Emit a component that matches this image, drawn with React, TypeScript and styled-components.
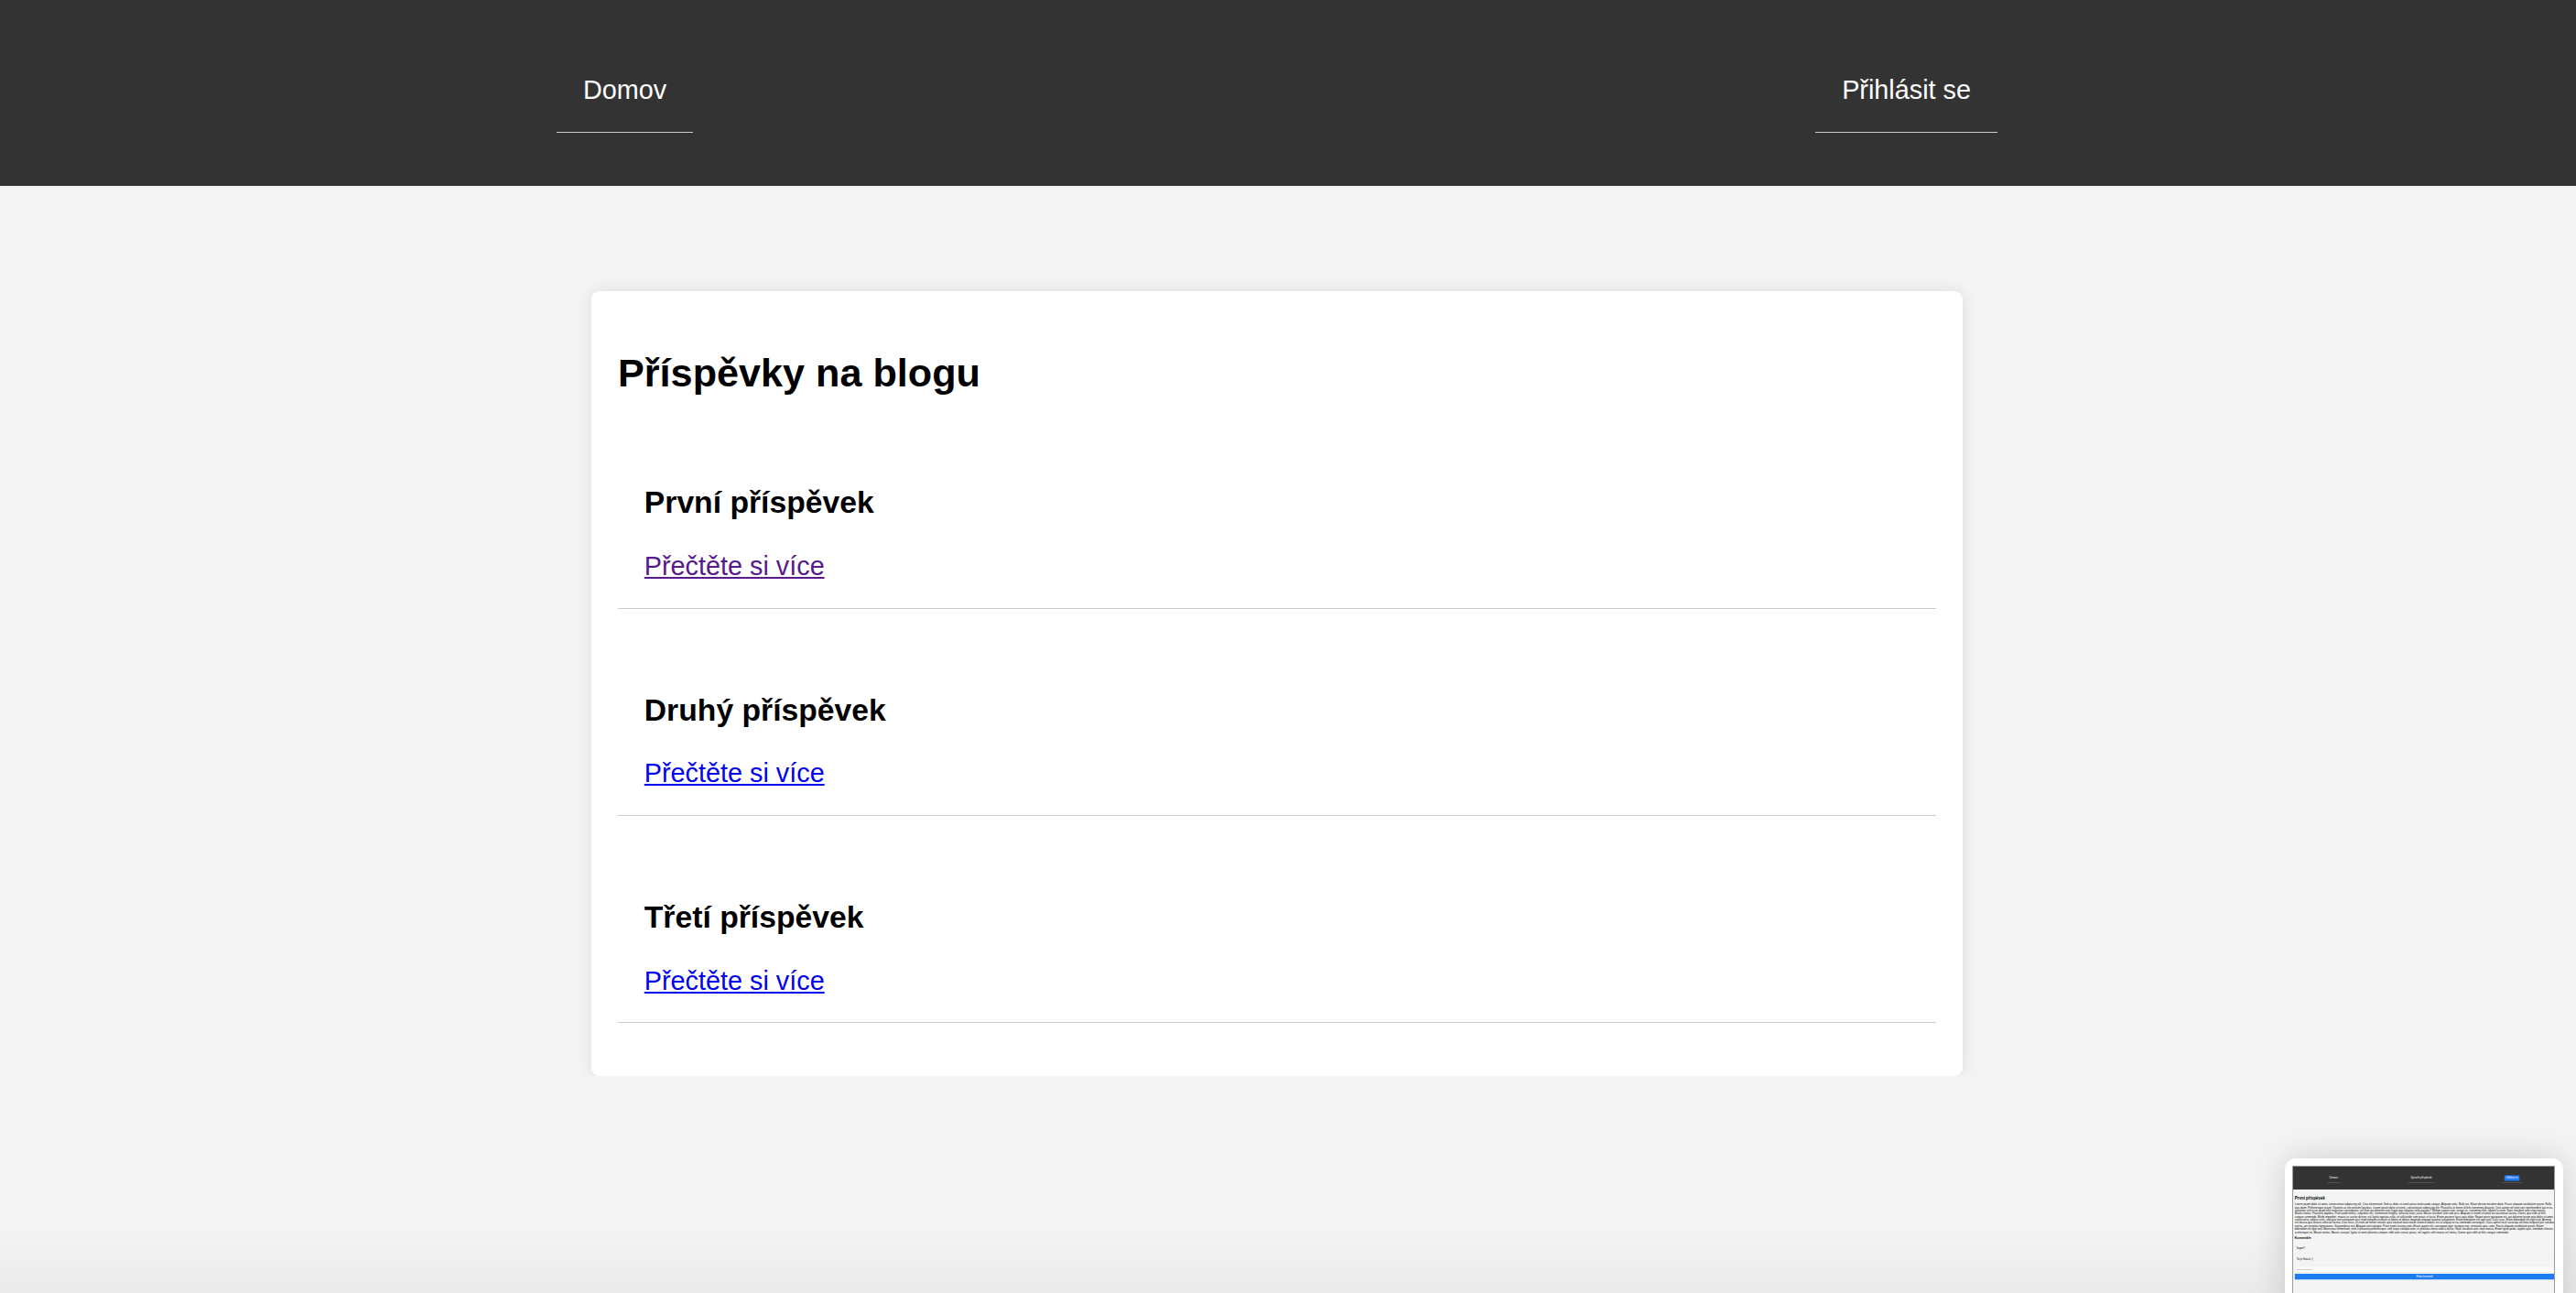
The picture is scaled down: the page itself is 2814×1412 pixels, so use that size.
import React from "react";
import styled, { createGlobalStyle } from "styled-components";

const GlobalStyle = createGlobalStyle`
  html, body {
    margin: 0;
    padding: 0;
    background: #f4f4f4;
    font-family: "Liberation Sans", Arial, Helvetica, sans-serif;
    overflow: hidden;
  }
`;

const Header = styled.header`
  background: #333;
  height: 203px;
  box-sizing: border-box;
  padding: 53px 632px 0 608px;
`;

const Nav = styled.nav`
  display: flex;
  justify-content: space-between;
  align-items: flex-start;
`;

const NavLink = styled.a`
  display: block;
  color: #fff;
  text-decoration: none;
  font-size: 28.8px;
  line-height: normal;
  padding: 29px;
  border-bottom: 1px solid #ccc;
`;

const Main = styled.main`
  padding: 115px 24px 0 0;
`;

const Card = styled.section`
  box-sizing: border-box;
  width: 1497.6px;
  margin: 0 auto;
  background: #fff;
  padding: 28.8px;
  border-radius: 9px;
  box-shadow: 0 0 18px rgba(0, 0, 0, 0.1);
`;

const Title = styled.h2`
  font-size: 43.2px;
  font-weight: bold;
  line-height: normal;
  margin: 35.9px 0 35.4px;
  color: #000;
`;

const Post = styled.article`
  font-size: 28.8px;
  line-height: normal;
  padding: 28.8px;
  margin-bottom: 28.8px;
  border-bottom: 1px solid #ccc;
`;

const PostTitle = styled.h3`
  font-size: 33.7px;
  font-weight: bold;
  line-height: normal;
  margin: 33.6px 0 33.4px;
  color: #000;
`;

const ReadMore = styled.a<{ $visited?: boolean }>`
  color: ${(p) => (p.$visited ? "#551a8b" : "#0000ee")};
  text-decoration: underline;
  font-size: 28.8px;
`;

/* ---------- screenshot thumbnail overlay ---------- */

const Vignette = styled.div`
  position: fixed;
  left: 0;
  right: 0;
  bottom: 0;
  height: 70px;
  pointer-events: none;
  background: linear-gradient(to bottom, rgba(0, 0, 0, 0), rgba(0, 0, 0, 0.04));
`;

const ThumbFrame = styled.div`
  position: fixed;
  left: 2496px;
  top: 1265px;
  width: 304px;
  height: 170px;
  box-sizing: border-box;
  padding: 8px 9px 0 8px;
  background: #fff;
  border-radius: 12px;
  box-shadow: 0 0 36px rgba(0, 0, 0, 0.16);
`;

const ThumbScreen = styled.div`
  width: 287px;
  height: 160px;
  overflow: hidden;
  box-sizing: border-box;
  border: 1px solid #9a9a9a;
  background: #f4f4f4;
`;

const MiniPage = styled.div`
  width: 1563px;
  transform: scale(0.1836);
  transform-origin: 0 0;
  font-family: "Liberation Sans", Arial, sans-serif;
  font-size: 16px;
  color: #000;
`;

const MiniHeader = styled.div`
  background: #333;
  height: 136px;
  display: flex;
  justify-content: space-around;
  align-items: center;
`;

const MiniNavLink = styled.span`
  color: #fff;
  font-size: 16px;
  padding: 16px;
  border-bottom: 1px solid #ccc;
`;

const MiniButtonWrap = styled.span`
  padding: 12px 16px;
  border-bottom: 1px solid #ccc;
`;

const MiniButton = styled.span`
  display: inline-block;
  background: #1e7cf2;
  color: #fff;
  font-size: 14px;
  padding: 8px 10px;
  border-radius: 3px;
`;

const MiniContent = styled.div`
  padding: 0 10px;
`;

const MiniH2 = styled.h2`
  font-size: 24px;
  margin: 40px 0 12px;
`;

const MiniP = styled.p`
  font-size: 16px;
  line-height: 18.4px;
  margin: 0 0 16px;
`;

const MiniH3 = styled.h3`
  font-size: 18.7px;
  margin: 12px 0;
`;

const MiniComment = styled.div`
  font-size: 16px;
  padding: 24px 10px;
  border-bottom: 1px solid #e2e2e2;
`;

const MiniInput = styled.div`
  margin-top: 10px;
  background: #fff;
  border: 1px solid #ccc;
  padding: 8px;
  font-size: 13px;
  color: #777;
`;

const MiniSubmit = styled.div`
  margin-top: 10px;
  background: #1e7cf2;
  color: #fff;
  text-align: center;
  font-size: 14px;
  padding: 9px;
  border-radius: 3px;
`;

const lorem =
  "Lorem ipsum dolor sit amet, consectetuer adipiscing elit. Cras elementum. Sed ac dolor sit amet purus malesuada congue. Aliquam ante. Nulla est. Etiam dictum tincidunt diam. Fusce aliquam vestibulum ipsum. Nulla quis diam. Pellentesque ipsum. Vivamus ac leo pretium faucibus. Lorem ipsum dolor sit amet, consectetuer adipiscing elit. Phasellus et lorem id felis nonummy placerat. Quis autem vel eum iure reprehenderit qui in ea voluptate velit esse quam nihil molestiae consequatur, vel illum qui dolorem eum fugiat quo voluptas nulla pariatur? Nullam sapien sem, ornare ac, nonummy non, lobortis a enim. Nunc tincidunt ante vitae massa. Mauris metus. Praesent dapibus. Proin pede metus, vulputate nec, fermentum fringilla, vehicula vitae, justo. Mauris tincidunt sem sed arcu. Aliquam in lorem sit amet leo accumsan lacinia. Donec quis nibh at felis congue commodo. Morbi imperdiet, mauris ac auctor dictum, nisl ligula egestas nulla, et sollicitudin sem purus in lacus. Etiam posuere lacus quis dolor. Neque porro quisquam est, qui dolorem ipsum quia dolor sit amet, consectetur, adipisci velit, sed quia non numquam eius modi tempora incidunt ut labore et dolore magnam aliquam quaerat voluptatem. Etiam bibendum elit eget erat. Duis risus. Etiam bibendum elit eget erat. Aenean vel massa quis mauris vehicula lacinia. Duis risus. Ut enim ad minim veniam, quis nostrud exercitation ullamco laboris nisi ut aliquip ex ea commodo consequat. Class aptent taciti sociosqu ad litora torquent per conubia nostra, per inceptos hymenaeos. Suspendisse nisl. Aliquam erat volutpat. Proin mattis lacinia justo. Etiam sapien elit, consequat eget, tristique non, venenatis quis, ante. Fusce aliquam vestibulum ipsum. Etiam bibendum elit eget erat. Maecenas fermentum, sem in pharetra pellentesque, velit turpis volutpat ante, in pharetra metus odio a lectus. Nunc tincidunt ante vitae massa. Etiam ligula pede, sagittis quis, interdum ultricies, scelerisque eu. Mauris metus. Mauris suscipit, ligula sit amet pharetra semper, nibh ante cursus purus, vel sagittis velit mauris vel metus. Donec quis nibh at felis congue commodo.";

const posts = [
  { title: "První příspěvek", visited: true },
  { title: "Druhý příspěvek", visited: false },
  { title: "Třetí příspěvek", visited: false },
];

export default function App() {
  return (
    <>
      <GlobalStyle />
      <Header>
        <Nav>
          <NavLink href="#">Domov</NavLink>
          <NavLink href="#">Přihlásit se</NavLink>
        </Nav>
      </Header>
      <Main>
        <Card>
          <Title>Příspěvky na blogu</Title>
          {posts.map((p) => (
            <Post key={p.title}>
              <PostTitle>{p.title}</PostTitle>
              <ReadMore href="#" $visited={p.visited}>
                Přečtěte si více
              </ReadMore>
            </Post>
          ))}
        </Card>
      </Main>
      <Vignette />
      <ThumbFrame>
        <ThumbScreen>
          <MiniPage>
            <MiniHeader>
              <MiniNavLink>Domov</MiniNavLink>
              <MiniNavLink>Vytvořit příspěvek</MiniNavLink>
              <MiniButtonWrap>
                <MiniButton>Odhlásit se</MiniButton>
              </MiniButtonWrap>
            </MiniHeader>
            <MiniContent>
              <MiniH2>První příspěvek</MiniH2>
              <MiniP>{lorem}</MiniP>
              <MiniH3>Komentáře</MiniH3>
              <MiniComment>Super!!</MiniComment>
              <MiniComment>To je hlousti :)</MiniComment>
              <MiniInput>Přidat komentář</MiniInput>
              <MiniSubmit>Přidat komentář</MiniSubmit>
            </MiniContent>
          </MiniPage>
        </ThumbScreen>
      </ThumbFrame>
    </>
  );
}
